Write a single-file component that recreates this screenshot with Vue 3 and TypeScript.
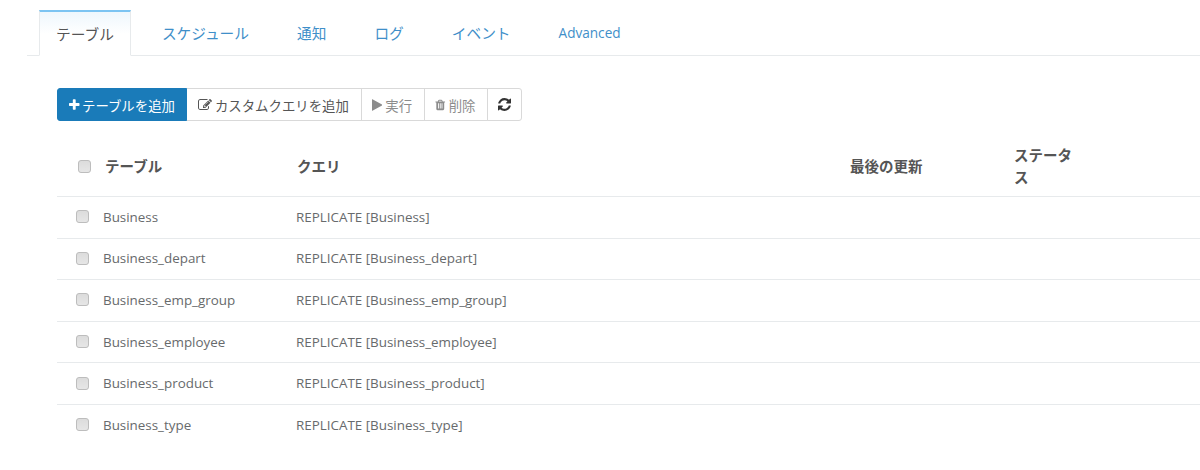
<script setup lang="ts">
const tabs = ['テーブル', 'スケジュール', '通知', 'ログ', 'イベント', 'Advanced']
const rows = ['Business', 'Business_depart', 'Business_emp_group', 'Business_employee', 'Business_product', 'Business_type']
const icons = {
  plus: 'M1600 736v192q0 40-28 68t-68 28h-416v416q0 40-28 68t-68 28h-192q-40 0-68-28t-28-68v-416h-416q-40 0-68-28t-28-68v-192q0-40 28-68t68-28h416v-416q0-40 28-68t68-28h192q40 0 68 28t28 68v416h416q40 0 68 28t28 68z',
  edit: 'M888 1184l116-116-152-152-116 116v56h96v96h56zm440-720q-16-16-33 1l-350 350q-17 17-1 33t33-1l350-350q17-17 1-33zm80 594v190q0 119-84.5 203.5t-203.5 84.5h-832q-119 0-203.5-84.5t-84.5-203.5v-832q0-119 84.5-203.5t203.5-84.5h832q63 0 117 25 15 7 18 23 3 17-9 29l-49 49q-14 14-32 8-23-6-45-6h-832q-66 0-113 47t-47 113v832q0 66 47 113t113 47h832q66 0 113-47t47-113v-126q0-13 9-22l64-64q15-15 35-7t20 29zm-96-738l288 288-672 672h-288v-288zm444 132l-92 92-288-288 92-92q28-28 68-28t68 28l152 152q28 28 28 68t-28 68z',
  play: 'M1576 927l-1328 738q-23 13-39.5 3t-16.5-36v-1472q0-26 16.5-36t39.5 3l1328 738q23 13 23 31t-23 31z',
  trash: 'M704 1376v-704q0-14-9-23t-23-9h-64q-14 0-23 9t-9 23v704q0 14 9 23t23 9h64q14 0 23-9t9-23zm256 0v-704q0-14-9-23t-23-9h-64q-14 0-23 9t-9 23v704q0 14 9 23t23 9h64q14 0 23-9t9-23zm256 0v-704q0-14-9-23t-23-9h-64q-14 0-23 9t-9 23v704q0 14 9 23t23 9h64q14 0 23-9t9-23zm-544-992h448l-48-117q-7-9-17-11h-317q-10 2-17 11zm928 32v64q0 14-9 23t-23 9h-96v948q0 83-47 143.5t-113 60.5h-832q-66 0-113-58.5t-47-141.5v-952h-96q-14 0-23-9t-9-23v-64q0-14 9-23t23-9h309l70-167q15-37 54-63t79-26h320q40 0 79 26t54 63l70 167h309q14 0 23 9t9 23z',
  refresh: 'M1639 1056q0 5-1 7-64 268-268 434.5t-478 166.5q-146 0-282.5-55t-243.5-157l-129 129q-19 19-45 19t-45-19-19-45v-448q0-26 19-45t45-19h448q26 0 45 19t19 45-19 45l-137 137q71 66 161 102t187 36q134 0 250-65t186-179q11-17 53-117 8-23 30-23h192q13 0 22.5 9.5t9.5 22.5zm25-800v448q0 26-19 45t-45 19h-448q-26 0-45-19t-19-45 19-45l138-138q-148-137-349-137-134 0-250 65t-186 179q-11 17-53 117-8 23-30 23h-199q-13 0-22.5-9.5t-9.5-22.5v-7q65-268 270-434.5t480-166.5q146 0 284 55.5t245 156.5l130-129q19-19 45-19t45 19 19 45z'
}
</script>

<template>
  <div class="page">
    <ul class="tabs">
      <li v-for="(t, i) in tabs" :key="t" class="tab" :class="{ active: i === 0, latin: t === 'Advanced' }">{{ t }}</li>
    </ul>
    <div class="content">
      <div class="toolbar">
        <button class="btn primary">
          <svg class="ic narrow" viewBox="192 0 1408 1792"><path :d="icons.plus" /></svg>テーブルを追加
        </button>
        <button class="btn">
          <svg class="ic" viewBox="0 0 1792 1792"><path :d="icons.edit" /></svg>カスタムクエリを追加
        </button>
        <button class="btn off">
          <svg class="ic narrow" viewBox="192 0 1408 1792"><path :d="icons.play" /></svg>実行
        </button>
        <button class="btn off">
          <svg class="ic narrow" viewBox="128 0 1536 1792"><path :d="icons.trash" /></svg>削除
        </button>
        <button class="btn last">
          <svg class="ic dark" viewBox="128 128 1536 1536"><path :d="icons.refresh" /></svg>
        </button>
      </div>
      <table class="grid">
        <colgroup>
          <col class="c1" /><col class="c2" /><col class="c3" /><col class="c4" /><col class="c5" /><col />
        </colgroup>
        <thead>
          <tr>
            <th><input type="checkbox" class="cb head" /></th>
            <th class="first-col">テーブル</th>
            <th>クエリ</th>
            <th>最後の更新</th>
            <th>ステータス</th>
            <th></th>
          </tr>
        </thead>
        <tbody>
          <tr v-for="r in rows" :key="r">
            <td><input type="checkbox" class="cb" /></td>
            <td>{{ r }}</td>
            <td>REPLICATE [{{ r }}]</td>
            <td></td>
            <td></td>
            <td></td>
          </tr>
        </tbody>
      </table>
    </div>
  </div>
</template>

<style>
html, body { margin: 0; background: #fff; }
</style>

<style scoped>
.page {
  width: 1200px;
  height: 470px;
  overflow: hidden;
  background: #fff;
  font-family: "Open Sans", "Noto Sans CJK JP", sans-serif;
  font-size: 13.4px;
  color: #676a6c;
}
.tabs {
  display: flex;
  gap: 14px;
  list-style: none;
  margin: 0 0 0 27px;
  padding: 10px 0 0 12px;
  height: 56px;
  box-sizing: border-box;
  border-bottom: 1px solid #e7eaec;
}
.tab {
  padding: 0 17px;
  height: 46px;
  box-sizing: border-box;
  line-height: 46px;
  font-size: 14.7px;
  color: #3f8fc9;
  white-space: nowrap;
}
.tab.latin { font-size: 13.6px; }
.tab.active {
  color: #555;
  line-height: 44px;
  border: 1px solid #e7eaec;
  border-top: 2px solid #7cc4f2;
  border-bottom: 1px solid #fff;
  background: linear-gradient(to bottom, #eef7fd 0, #fff 22px);
  padding: 0 16px;
}
.content { padding: 32px 0 0 57px; }
.toolbar { display: flex; height: 33px; }
.btn {
  display: flex;
  align-items: center;
  gap: 3px;
  height: 33px;
  box-sizing: border-box;
  margin: 0 0 0 -1px;
  padding: 0 12px 0 11px;
  font: inherit;
  color: #555;
  background: #fff;
  border: 1px solid #d9d9d9;
}
.btn.primary {
  margin-left: 0;
  gap: 2.5px;
  padding: 0 11px;
  color: #fff;
  background: #1a7bb9;
  border-color: #1a7bb9;
  border-radius: 3px 0 0 3px;
  position: relative;
}
.btn.off { color: #8c8c8c; padding: 0 12px 0 10px; }
.btn.last { border-radius: 0 3px 3px 0; padding: 0 10px; }
.ic { width: 14px; height: 14px; fill: currentColor; flex: none; }
.ic.narrow { width: 10.5px; }
.ic.dark { fill: #333; width: 13px; height: 13px; }
.grid {
  width: 1143px;
  margin-top: 16px;
  border-collapse: collapse;
  table-layout: fixed;
}
.c1 { width: 46px; }
.c2 { width: 193px; }
.c3 { width: 553px; }
.c4 { width: 164px; }
.c5 { width: 72px; }
th {
  height: 59px;
  padding: 0 0 0 1px;
  text-align: left;
  font-size: 14.5px;
  line-height: 22px;
  font-weight: 700;
  color: #555;
  border-bottom: 1px solid #e7eaec;
}
th.first-col { padding-left: 2px; }
td {
  height: 41.6px;
  box-sizing: border-box;
  padding: 0 0 1px;
  font-size: 13.4px;
  border-bottom: 1px solid #e7eaec;
}
tbody tr:last-child td { border-bottom: 1px solid #fff; }
.cb {
  appearance: none;
  display: block;
  width: 13px;
  height: 13px;
  margin: 0 0 0 19px;
  background: linear-gradient(to bottom, #dcdcdc, #e6e6e6);
  border: 1px solid #bdbdbd;
  border-radius: 3px;
  box-sizing: border-box;
}
.cb.head { margin-left: 20px; }
</style>
